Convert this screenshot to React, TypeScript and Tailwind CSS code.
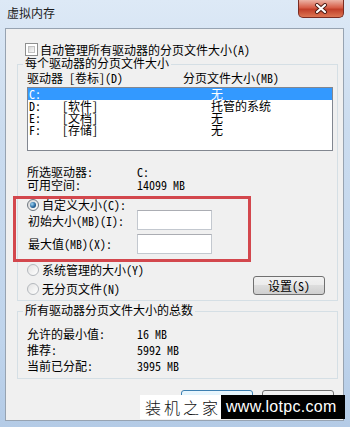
import React from 'react';

const Checkbox: React.FC = () => (
  <span className="w-[13px] h-[13px] shrink-0 border border-[#8e8f8f] bg-white p-[2px] box-border">
    <span className="block w-full h-full border border-[#c2c2c2] bg-gradient-to-br from-[#d6d6d6] to-[#fafafa]" />
  </span>
);

const Radio: React.FC<{ checked?: boolean }> = ({ checked }) => (
  <span
    className={
      checked
        ? 'w-[12px] h-[12px] shrink-0 rounded-full border border-[#6f7780] bg-gradient-to-br from-[#d4d4d4] to-white flex items-center justify-center'
        : 'w-[12px] h-[12px] shrink-0 rounded-full border border-[#b4b8bd] bg-gradient-to-br from-[#e2e2e2] to-white flex items-center justify-center'
    }
  >
    {checked && (
      <span className="w-[6px] h-[6px] rounded-full bg-[radial-gradient(circle_at_35%_35%,#9fd6f5,#2a6aa0_55%,#0e2f52)]" />
    )}
  </span>
);

const Button: React.FC<{ label: string; primary?: boolean; className?: string }> = ({ label, primary, className }) => (
  <div
    className={
      (primary
        ? 'border-[#3c7fb1] bg-[linear-gradient(#eaf6fd,#d9f0fc_50%,#bee6fd_50%,#a7d9f5)] '
        : 'border-[#707070] bg-[linear-gradient(#f2f2f2,#ebebeb_50%,#dddddd_50%,#cfcfcf)] ') +
      'border rounded-[3px] flex items-center justify-center text-[12px] leading-[12px] text-black ' +
      (className ?? '')
    }
  >
    {label}
  </div>
);

const drives = [
  { letter: 'C:', label: '', size: '无', selected: true },
  { letter: 'D:', label: '[软件]', size: '托管的系统' },
  { letter: 'E:', label: '[文档]', size: '无' },
  { letter: 'F:', label: '[存储]', size: '无' },
];

const totals = [
  { label: '允许的最小值:', value: '16 MB' },
  { label: '推荐:', value: '5992 MB' },
  { label: '当前已分配:', value: '3995 MB' },
];

export default function App() {
  return (
    <div className="relative w-[350px] h-[427px] overflow-hidden bg-[linear-gradient(#dde9f6,#cbdcef_30%,#bfd4ec_80%,#b4cbe6)] font-[family-name:'Noto_Sans_Mono_CJK_SC','Noto_Sans_CJK_SC',monospace] text-black">
      {/* title bar */}
      <div className="h-[28px] flex items-start justify-between">
        <div className="pl-[7px] pt-[6px] text-[12px] leading-[14px] text-[#1b1b1b] font-[family-name:'Noto_Sans_CJK_SC',sans-serif]">
          虚拟内存
        </div>
        <div className="mr-[6px] w-[46px] h-[18px] border border-t-0 border-[#7a2c22] rounded-b-[5px] bg-[linear-gradient(#ecb3a5,#d65d47_45%,#c13f29_55%,#dc7552)] flex items-center justify-center">
          <svg width="14" height="11" viewBox="0 0 14 11">
            <path d="M3 2 L11 9 M11 2 L3 9" stroke="#4a1a12" strokeWidth="4" strokeLinecap="round" />
            <path d="M3 2 L11 9 M11 2 L3 9" stroke="#ffffff" strokeWidth="2.2" strokeLinecap="round" />
          </svg>
        </div>
      </div>

      {/* client area */}
      <div className="ml-[5px] w-[339px] h-[393px] border border-[#97a3b1] bg-[#f0f0f0] flex flex-col text-[12px]">
        <div className="mt-[14px] h-[13px] pl-[19px] flex items-center gap-[2px] leading-[13px]">
          <Checkbox />
          <span>自动管理所有驱动器的分页文件大小(A)</span>
        </div>

        {/* per-drive group */}
        <div className="relative mt-[8px] ml-[11px] w-[321px] border border-[#d5dfe5] pb-[5px] flex flex-col">
          <span className="absolute left-[5px] -top-[9px] px-[2px] bg-[#f0f0f0] leading-[14px]">每个驱动器的分页文件大小</span>

          <div className="mt-[6px] h-[14px] pl-[9px] flex leading-[14px]">
            <span className="w-[156px]">驱动器 [卷标](D)</span>
            <span>分页文件大小(MB)</span>
          </div>

          <div className="mt-[2px] ml-[9px] w-[306px] h-[64px] border border-[#828790] bg-white flex flex-col">
            {drives.map((d) => (
              <div
                key={d.letter}
                className={
                  'h-[12px] leading-[12px] flex ' + (d.selected ? 'bg-[#3399ff] text-white' : 'text-black')
                }
              >
                <span className="w-[34px] pl-[1px]">{d.letter}</span>
                <span className="w-[149px]">{d.label}</span>
                <span>{d.size}</span>
              </div>
            ))}
          </div>

          <div className="mt-[14px] pl-[9px] flex flex-col leading-[13px]">
            <div className="h-[13px] flex">
              <span className="w-[110px]">所选驱动器:</span>
              <span>C:</span>
            </div>
            <div className="h-[13px] flex">
              <span className="w-[110px]">可用空间:</span>
              <span>14099 MB</span>
            </div>
          </div>

          {/* highlighted custom size box */}
          <div className="mt-[5px] -ml-[5px] w-[238px] border-[3px] border-[#d3474d] pb-[5px] flex flex-col">
            <div className="h-[11px] pl-[11px] flex items-center gap-[3px] leading-[11px]">
              <Radio checked />
              <span>自定义大小(C):</span>
            </div>
            <div className="h-[20px] pl-[12px] flex items-center">
              <span className="w-[109px] leading-[14px] pt-[2px]">初始大小(MB)(I):</span>
              <span className="w-[75px] h-[20px] border border-[#c3c8cf] border-t-[#abadb3] bg-white" />
            </div>
            <div className="mt-[4px] h-[20px] pl-[12px] flex items-center">
              <span className="w-[109px] leading-[14px]">最大值(MB)(X):</span>
              <span className="w-[75px] h-[20px] border border-[#c3c8cf] border-t-[#abadb3] bg-white" />
            </div>
          </div>

          <div className="mt-[1px] h-[13px] pl-[9px] flex items-center gap-[3px] leading-[13px]">
            <Radio />
            <span>系统管理的大小(Y)</span>
          </div>

          <div className="h-[19px] pl-[9px] flex items-end">
            <div className="h-[13px] flex items-center gap-[3px] leading-[13px]">
              <Radio />
              <span>无分页文件(N)</span>
            </div>
            <Button label="设置(S)" className="ml-auto mr-[12px] w-[72px] h-[19px]" />
          </div>
        </div>

        {/* totals group */}
        <div className="relative mt-[10px] ml-[11px] w-[321px] border border-[#d5dfe5] pt-[14px] pb-[4px] pl-[9px] flex flex-col">
          <span className="absolute left-[5px] -top-[9px] px-[2px] bg-[#f0f0f0] leading-[14px]">所有驱动器分页文件大小的总数</span>
          {totals.map((t) => (
            <div key={t.label} className="h-[16px] leading-[16px] flex">
              <span className="w-[110px]">{t.label}</span>
              <span>{t.value}</span>
            </div>
          ))}
        </div>

        <div className="mt-[11px] pr-[9px] flex justify-end gap-[9px]">
          <Button label="确定" primary className="w-[72px] h-[23px]" />
          <Button label="取消" className="w-[72px] h-[23px]" />
        </div>
      </div>

      {/* watermark */}
      <div className="absolute left-[140px] top-[395px] h-[24px] flex">
        <div className="w-[81px] h-full bg-white flex items-center pl-[5px] text-[16px] leading-[16px] tracking-[3px] font-light text-[#111] font-[family-name:'Noto_Sans_CJK_SC',sans-serif]">
          装机之家
        </div>
        <div className="w-[124px] h-full bg-black flex items-center pl-[5px] text-[16px] leading-[16px] tracking-[0.3px] text-white font-[family-name:'Liberation_Sans',sans-serif]">
          www.lotpc.com
        </div>
      </div>
    </div>
  );
}
